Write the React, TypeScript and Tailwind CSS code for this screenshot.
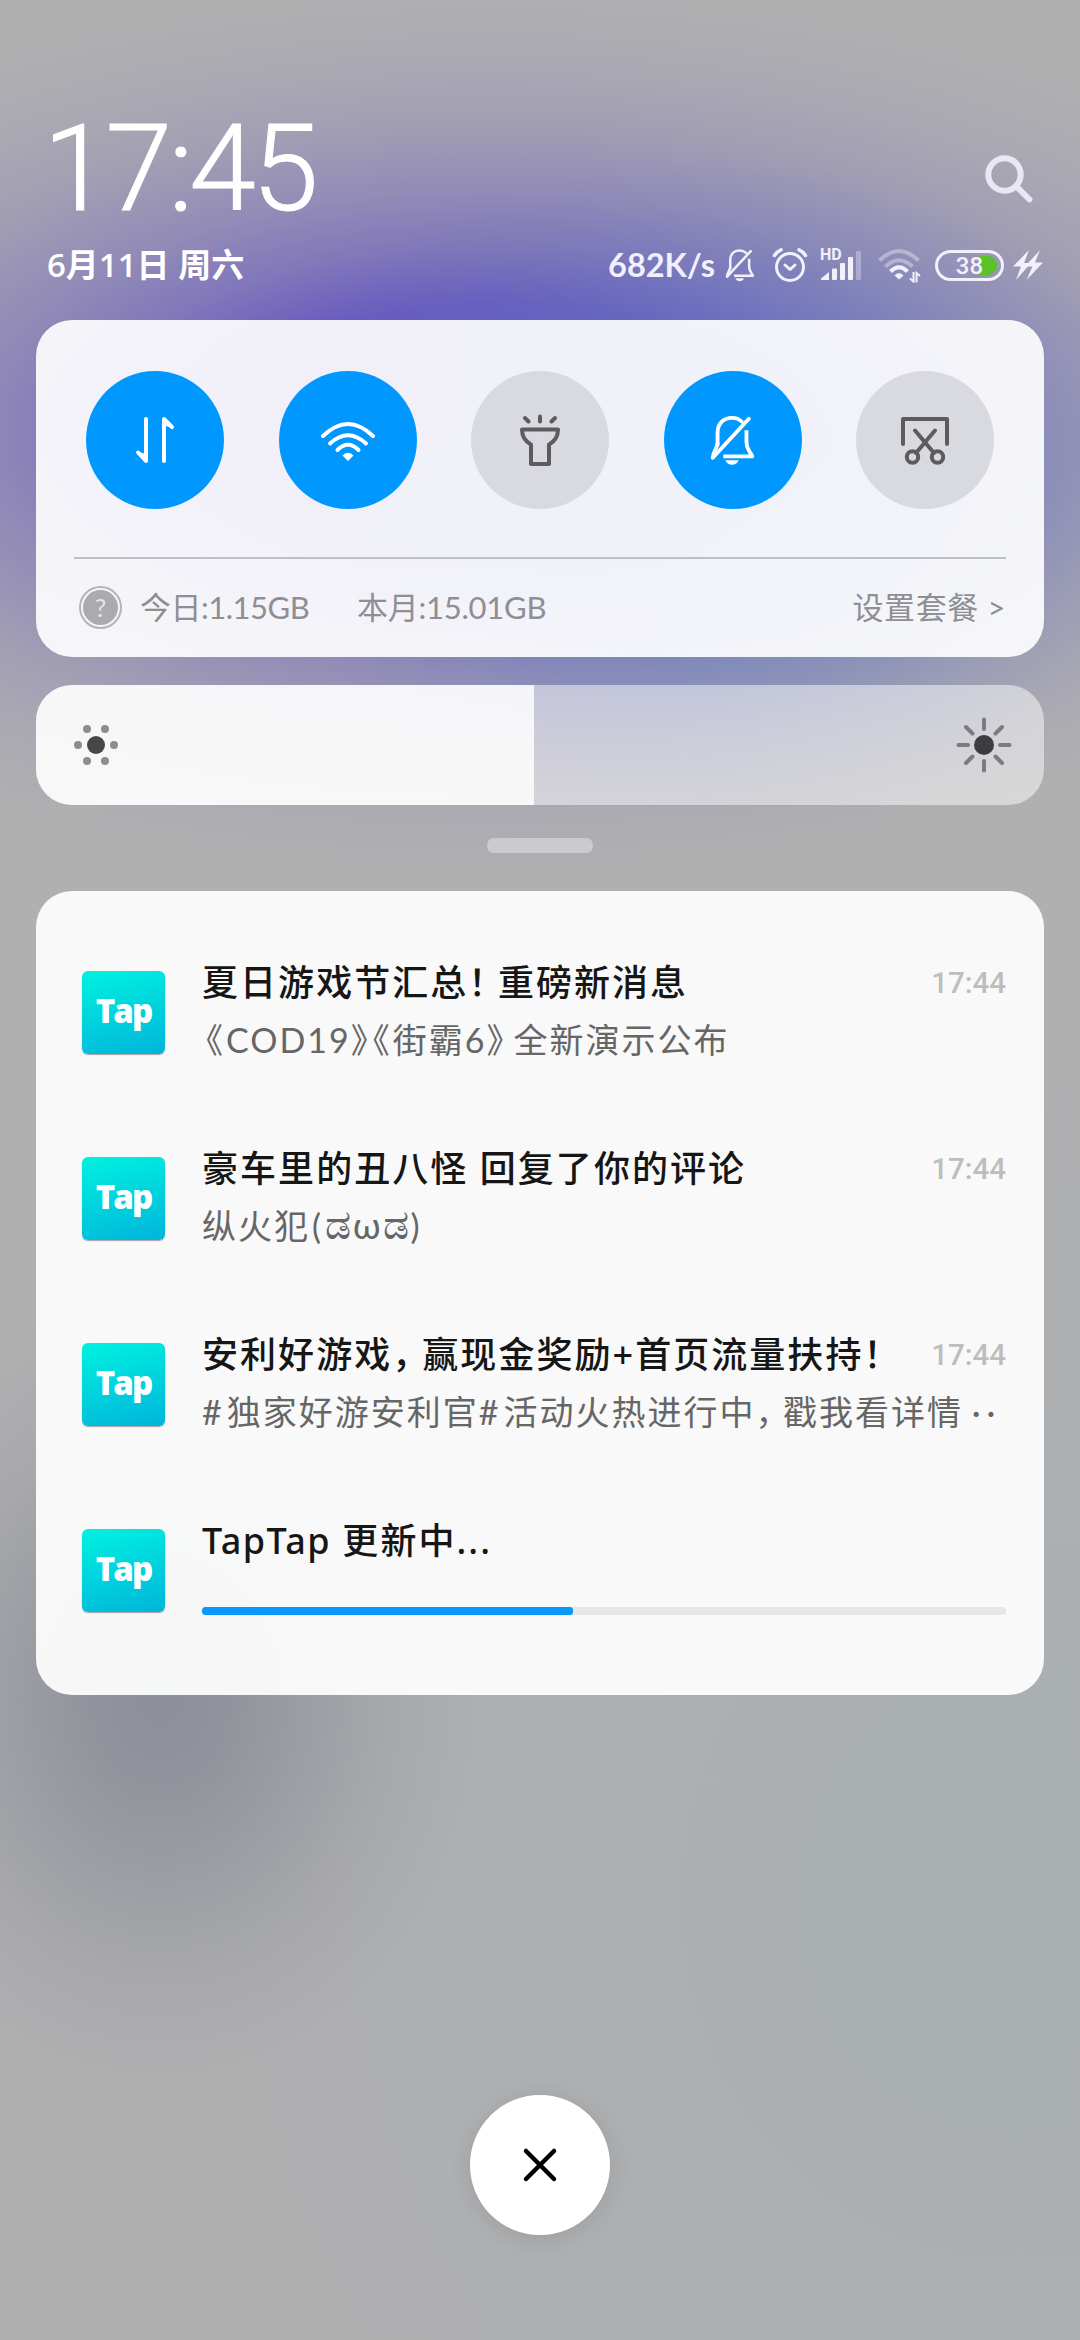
import React from "react";

const CJK = "font-['Noto_Sans','Noto_Sans_CJK_SC',sans-serif]";
const ROUND_CJK = "font-['Lato','Noto_Sans_CJK_SC','Noto_Sans',sans-serif]";

function P({ children, trim }: { children: string; trim: number }) {
  return <span style={{ letterSpacing: `${trim}px` }}>{children}</span>;
}

function BellOff({ className, w = 3 }: { className?: string; w?: number }) {
  return (
    <svg viewBox="0 0 48 54" className={className} fill="none" stroke="currentColor" strokeWidth={w} strokeLinecap="round" strokeLinejoin="round">
      <path d="M8.500 32V19.500C8.500 10 14.500 4 23.500 4c4 0 7.500 1.300 10 3.800" />
      <path d="M3.500 45.500 41 5" />
      <path d="M8.500 31C8 35 4 39 3.500 45" />
      <path d="M38.500 17v12c0 7.500 2 7 6 15H14.500" strokeLinecap="butt" />
      <path d="M16.500 48h14c-1.500 3-4 4.800-7 4.800s-5.500-1.800-7-4.800z" fill="currentColor" stroke="none" />
    </svg>
  );
}

function StatusIcons() {
  return (
    <div className="flex h-[34px] items-center text-[#f1f0fb]">
      <BellOff className="ml-[8px] h-[34px] w-[34px]" w={4} />
      <svg viewBox="0 0 36 36" className="ml-[15px] h-[36px] w-[36px]" fill="none" stroke="currentColor" strokeWidth="3" strokeLinecap="round">
        <circle cx="18" cy="20" r="13.500" />
        <path d="M2.500 8.500Q5 4.500 9 2.800M33.500 8.500Q31 4.500 27 2.800" strokeWidth="3.500" />
        <path d="m13 18 5 4.500 5-4.500" strokeLinejoin="round" />
      </svg>
      <div className="relative ml-[12px] h-[34px] w-[42px]">
        <span className="absolute -top-[3px] left-0 font-[Roboto,sans-serif] text-[16px] leading-[20px] font-bold">HD</span>
        <svg viewBox="0 0 42 34" className="h-[34px] w-[42px]" fill="currentColor">
          <path d="M1 30.500 9 24v8H1z" />
          <rect x="12" y="20.500" width="5" height="11.500" rx="1" />
          <rect x="20" y="15" width="5" height="17" rx="1" />
          <rect x="28" y="9" width="5" height="23" rx="1" />
          <rect x="36" y="3" width="5" height="29" rx="1" opacity=".35" />
        </svg>
      </div>
      <svg viewBox="0 0 44 36" className="ml-[15px] h-[36px] w-[44px]" fill="none" stroke="currentColor" strokeWidth="4">
        <path d="M2.500 13.500Q22-5.500 41.500 13.500" opacity=".4" />
        <path d="M8.500 19.500Q22 7 35.500 19.500" opacity=".4" />
        <path d="M13.500 24.500Q22 16 30.500 24.500" />
        <path d="M22 32.500l-4.500-4a5.500 5.500 0 0 1 9 0z" fill="currentColor" stroke="none" />
        <path d="M36.500 25v9.500l-3.500-3M39.500 35.500V26l3.500 3" strokeWidth="2" />
      </svg>
      <div className="relative ml-[14px] flex h-[31px] w-[69px] items-center justify-end rounded-full border-[3px] border-current pr-[4px]">
        <div className="h-[19px] w-[18px] rounded-r-full bg-[#59c326]" />
        <span className="absolute inset-0 pt-px text-center font-[Roboto,sans-serif] text-[24px] leading-[25px] font-medium">38</span>
      </div>
      <svg viewBox="0 0 30 32" className="ml-[9px] h-[32px] w-[30px]" fill="currentColor">
        <path d="M16 1 0 17.500h8L3 31 18 14h-7z" />
        <path d="M27 1 12 17.500h7.500L13.500 31 30 13.500h-8z" />
      </svg>
    </div>
  );
}

function Tile({ on, children }: { on?: boolean; children: React.ReactNode }) {
  return (
    <div className={`flex size-[138px] items-center justify-center rounded-full ${on ? "bg-[#0098ff] text-white" : "bg-[#d9d9e0] text-[#5c5c60]"}`}>
      {children}
    </div>
  );
}

function QuickPanel() {
  return (
    <section className="mx-[36px] mt-[25px] h-[337px] rounded-[36px] bg-white/[0.91] pt-[51px]">
      <div className="flex justify-between px-[50px]">
        <Tile on>
          <svg viewBox="0 0 42 50" className="h-[50px] w-[42px]" fill="none" stroke="currentColor" strokeWidth="4" strokeLinecap="round" strokeLinejoin="round">
            <path d="M12 4v42L4 37.500M30 46V4l8 8" />
            <path d="M12 46 4 37.500l8 3zM30 4l8 8-8-3z" fill="currentColor" strokeWidth="2" />
          </svg>
        </Tile>
        <Tile on>
          <svg viewBox="0 0 60 44" className="h-[44px] w-[60px]" fill="none" stroke="currentColor" strokeWidth="4" strokeLinecap="round">
            <path d="M5 18Q30-6 55 18" />
            <path d="M12 25.500Q30 9 48 25.500" />
            <path d="M19.500 32Q30 21.500 40.500 32" />
            <path d="M30 43l-5.500-5.500a7 7 0 0 1 11 0z" fill="currentColor" stroke="none" />
          </svg>
        </Tile>
        <Tile>
          <svg viewBox="0 0 44 54" className="h-[54px] w-[44px]" fill="none" stroke="currentColor" strokeWidth="4" strokeLinecap="round" strokeLinejoin="round">
            <path d="M4 16.500h36c0 8-3.500 12-9 15V51H13V31.500C7.500 28.500 4 24.500 4 16.500z" />
            <path d="M22 3.500v5M7 5l3.500 3.500M37 5l-3.500 3.500" />
          </svg>
        </Tile>
        <Tile on>
          <BellOff className="h-[52px] w-[47px]" w={4} />
        </Tile>
        <Tile>
          <svg viewBox="0 0 50 50" className="h-[50px] w-[50px]" fill="none" stroke="currentColor" strokeWidth="4" strokeLinecap="round" strokeLinejoin="round">
            <path d="M3 29V4h44v25" />
            <path d="M15 15.500 34 38M35 15.500 16 38" />
            <circle cx="12.500" cy="42" r="5.700" />
            <circle cx="37.500" cy="42" r="5.700" />
          </svg>
        </Tile>
      </div>
      <div className="mx-[38px] mt-[48px] h-[2px] bg-[#bfbfc6]" />
      <div className={`flex h-[97px] items-center pr-[38px] pl-[43px] text-[31px] text-[#8e8e93] ${ROUND_CJK}`}>
        <div className="flex size-[43px] items-center justify-center rounded-full border-2 border-[#b5b5b7] p-[2px]">
          <div className="flex size-full items-center justify-center rounded-full bg-[#ababad] text-[25px] leading-none text-[#e4e4e8]">?</div>
        </div>
        <span className="ml-[18px] w-[170px] tracking-[-0.500px] whitespace-nowrap">今日:1.15GB</span>
        <span className="ml-[47px] tracking-[-0.250px] whitespace-nowrap">本月:15.01GB</span>
        <span className="ml-auto tracking-[0.600px] whitespace-nowrap">设置套餐 &gt;</span>
      </div>
    </section>
  );
}

function Brightness() {
  return (
    <div className="mx-[36px] mt-[28px] flex h-[120px] overflow-hidden rounded-[36px] bg-white/[0.49]">
      <div className="flex w-[498px] items-center bg-white/[0.83] pl-[37px]">
        <svg viewBox="0 0 46 46" className="size-[46px]" fill="#8d8d8f">
          <circle cx="23" cy="23" r="9" fill="#474747" />
          <circle cx="5" cy="23" r="4" />
          <circle cx="41" cy="23" r="4" />
          <circle cx="14" cy="7" r="4" />
          <circle cx="32" cy="7" r="4" />
          <circle cx="14" cy="39" r="4" />
          <circle cx="32" cy="39" r="4" />
        </svg>
      </div>
      <div className="flex flex-1 items-center justify-end pr-[32px]">
        <svg viewBox="0 0 56 56" className="size-[56px]" stroke="#7b7b80" strokeWidth="4" strokeLinecap="round">
          <circle cx="28" cy="28" r="10" fill="#3d3d3f" stroke="none" />
          <path d="M28 2.500v9.500M28 44v9.500M2.500 28H12M44 28h9.500M10 10l6.500 6.500M39.500 39.500 46 46M46 10l-6.500 6.500M16.500 39.500 10 46" />
        </svg>
      </div>
    </div>
  );
}

function TapIcon() {
  return (
    <div className="mt-[19px] flex size-[83px] shrink-0 items-center justify-center rounded-[6px] bg-linear-165 from-[#00f2e0] to-[#00b5da] pb-[4px] shadow-[0_1px_1px_rgba(0,0,0,0.35)]">
      <span className="font-['Open_Sans',sans-serif] text-[33px] leading-none font-extrabold tracking-[-2px] text-white">Tap</span>
    </div>
  );
}

function Row({ title, time, children }: { title: React.ReactNode; time?: string; children: React.ReactNode }) {
  return (
    <article className="flex h-[186px] pr-[38px] pl-[46px]">
      <TapIcon />
      <div className="ml-[37px] min-w-0 flex-1">
        <div className="flex h-[62px] items-center justify-between">
          <h2 className="text-[36px] leading-[62px] font-medium tracking-[2.050px] whitespace-nowrap text-[#161616]">{title}</h2>
          {time && <time className="font-[Roboto,sans-serif] text-[29.500px] font-medium text-[#bdbdbd]">{time}</time>}
        </div>
        {children}
      </div>
    </article>
  );
}

function Body({ children }: { children: React.ReactNode }) {
  return <p className={`-mt-[2px] text-[34px] leading-[56px] tracking-[2px] whitespace-nowrap text-[#666] ${ROUND_CJK}`}>{children}</p>;
}

function Notifications() {
  return (
    <section className={`mx-[36px] mt-[38px] h-[804px] rounded-[36px] bg-white/[0.925] pt-[61px] ${CJK}`}>
      <Row title={<>夏日游戏节汇总<P trim={-6.5}>！</P>重磅新消息</>} time="17:44">
        <Body><span className="-ml-[13px]"><P trim={3}>《</P></span>COD19<P trim={-12}>》</P><P trim={3}>《</P>街霸6<P trim={-7}>》</P>全新演示公布</Body>
      </Row>
      <Row title="豪车里的丑八怪 回复了你的评论" time="17:44">
        <Body>纵火犯<span className="mr-[2px] ml-[2px]">(</span><span className="text-[41px] leading-none">ಡ</span><span className="text-[36px] leading-none">ω</span><span className="text-[41px] leading-none">ಡ</span>)</Body>
      </Row>
      <Row title={<>安利好游戏<P trim={-6}>，</P>赢现金奖励+首页流量扶持！</>} time="17:44">
        <Body><P trim={5}>#</P>独家好游安利官<P trim={5}>#</P>活动火热进行中<P trim={-6.5}>，</P>戳我看详情<P trim={0}> </P><P trim={6}>··</P></Body>
      </Row>
      <Row title={<><span className="tracking-[1.400px]">TapTap</span> 更新中...</>}>
        <div className="mt-[35px] h-[8px] overflow-hidden rounded-[3px] bg-[#e7e7e7]">
          <div className="h-full w-[371px] rounded-[3px] bg-[#0897fb]" />
        </div>
      </Row>
    </section>
  );
}

export default function App() {
  return (
    <main className="flex h-[2340px] w-[1080px] flex-col overflow-hidden bg-[#b0b0b1] bg-[radial-gradient(ellipse_460px_330px_at_720px_490px,rgba(90,128,195,.6)_0%,rgba(90,128,195,.42)_40%,rgba(90,128,195,.13)_75%,rgba(90,128,195,0)_100%),radial-gradient(ellipse_920px_420px_at_490px_430px,rgba(98,82,192,1)_0%,rgba(98,82,192,.9)_30%,rgba(98,82,192,.6)_44%,rgba(98,82,192,.39)_57%,rgba(98,82,192,.18)_74%,rgba(98,82,192,.08)_87%,rgba(98,82,192,0)_105%),radial-gradient(ellipse_330px_400px_at_160px_1700px,rgba(126,130,143,.72)_0%,rgba(126,130,143,.62)_20%,rgba(126,130,143,.42)_42%,rgba(126,130,143,.16)_70%,rgba(126,130,143,0)_100%),radial-gradient(ellipse_800px_850px_at_1020px_1900px,rgba(164,174,177,.6),rgba(164,174,177,0))]">
      <header className="pt-[108px] pr-[37px] pl-[47px] text-white">
        <div className="flex h-[122px] items-center justify-between">
          <div className="-ml-[4px] font-[Roboto,sans-serif] text-[120px] leading-[122px] font-light tracking-[-4px] [-webkit-text-stroke:1px_white]">17:45</div>
          <svg viewBox="0 0 50 50" className="mt-[20px] mr-[9px] size-[50px]" fill="none" stroke="#e9e7f0" strokeWidth="6" strokeLinecap="round">
            <circle cx="20.500" cy="20.500" r="16.200" />
            <path d="m33 33 12.500 12.500" />
          </svg>
        </div>
        <div className="mt-[5px] flex h-[60px] items-center justify-between">
          <div className="font-['Open_Sans','Noto_Sans_CJK_SC',sans-serif] text-[33px] font-semibold">6月11日 周六</div>
          <div className="flex items-center">
            <span className="font-[Lato,sans-serif] text-[32.500px] font-bold text-[#f1f0fb]">682K/s</span>
            <StatusIcons />
          </div>
        </div>
      </header>
      <QuickPanel />
      <Brightness />
      <div className="mt-[33px] ml-[487px] h-[15px] w-[106px] rounded-[7px] bg-white/[0.36]" />
      <Notifications />
      <button className="mx-auto mt-[400px] flex size-[140px] items-center justify-center rounded-full bg-white shadow-[0_4px_24px_rgba(0,0,0,0.1)]">
        <svg viewBox="0 0 36 36" className="size-[36px]" stroke="#000" strokeWidth="4.500" strokeLinecap="round">
          <path d="M4 4l28 28M32 4 4 32" />
        </svg>
      </button>
    </main>
  );
}
